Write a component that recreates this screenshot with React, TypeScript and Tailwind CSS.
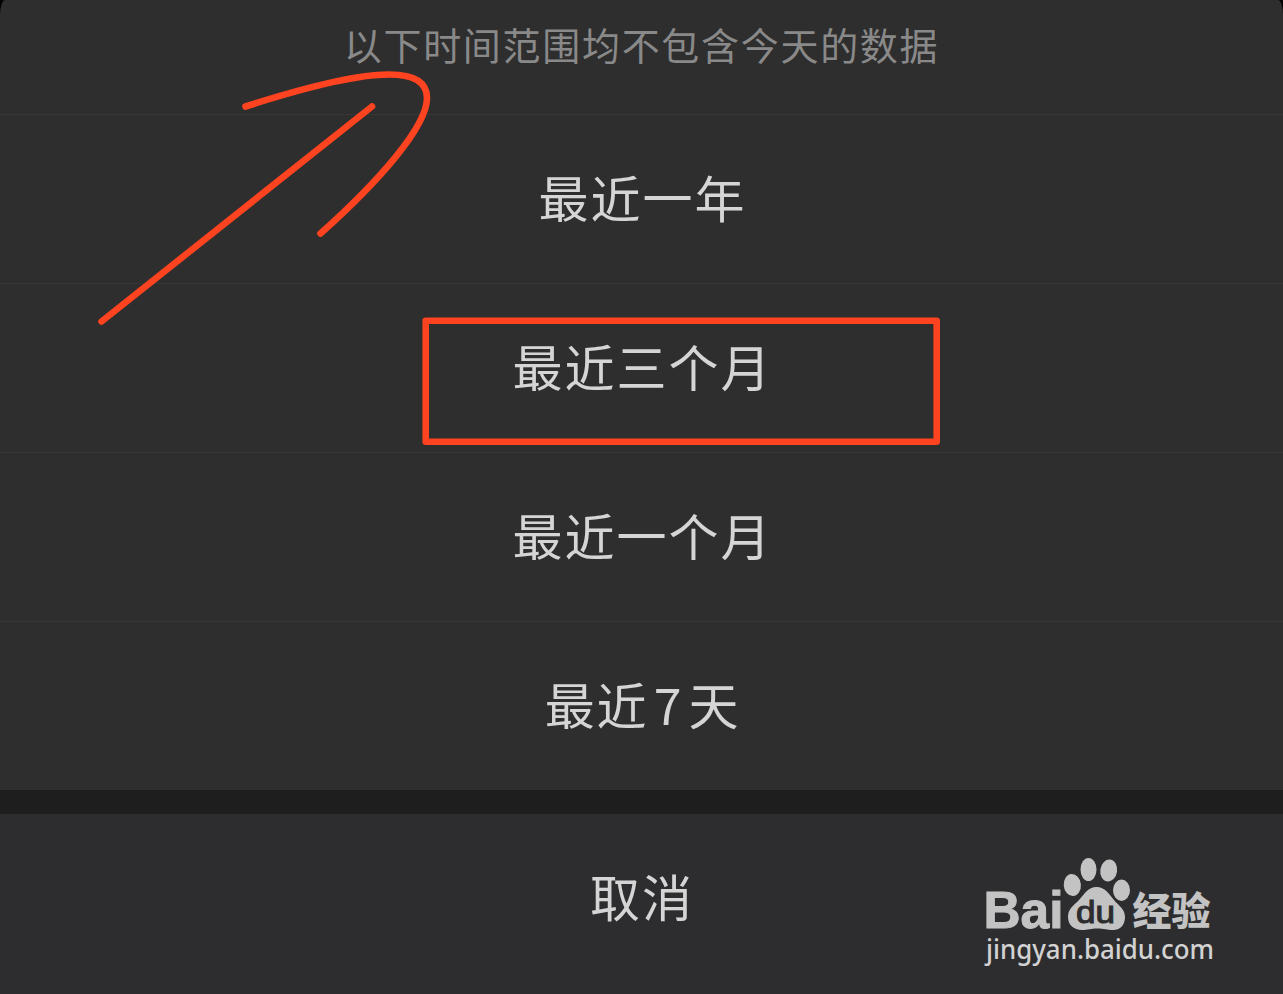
import type { ReactNode } from "react";

const options: { id: string; label: ReactNode }[] = [
  { id: "year", label: "最近一年" },
  { id: "quarter", label: "最近三个月" },
  { id: "month", label: "最近一个月" },
  { id: "week", label: <>最近<span className="mx-[5px]">7</span>天</> },
];

function Annotation() {
  return (
    <svg className="pointer-events-none absolute inset-0" width="1283" height="994" viewBox="0 0 1283 994" fill="none" stroke="#fd431f" strokeWidth="6.6" strokeLinecap="round" strokeLinejoin="round">
      <path d="M101.500 321.500L372 106.500" />
      <path d="M245.500 106.500C300 89 354 74.500 389 74.500C415 74.500 427 83 427 98C427 127 378 182 320.500 233.500" />
      <rect x="425.700" y="320.700" width="511" height="121" />
    </svg>
  );
}

function Watermark() {
  return (
    <svg className="absolute left-[970px] top-[840px] overflow-visible tracking-normal" width="260" height="140" viewBox="0 0 260 140" fill="#c3c3c3">
      <text x="13.500" y="88" fontFamily="Liberation Sans" fontWeight="700" fontSize="52" textLength="80" lengthAdjust="spacingAndGlyphs" stroke="#c3c3c3" strokeWidth="1">Bai</text>
      <ellipse cx="102.300" cy="45" rx="8.600" ry="11" transform="rotate(-5 102.300 45)" />
      <ellipse cx="118.500" cy="29.500" rx="8" ry="11.500" />
      <ellipse cx="138.700" cy="30.500" rx="8.400" ry="11" transform="rotate(8 138.700 30.500)" />
      <ellipse cx="151.500" cy="50.300" rx="8.500" ry="10.700" />
      <path d="M126.500 47C118 47 114.500 54 109 60C103 66 98 69 98 77C98 85 104 90 112 90C118 90 121 88.500 127 88.500C134 88.500 137 90 143 90C151 90 155 84 155 77C155 69 149 66 144 60C139 54 135 47 126.500 47Z" />
      <text x="106" y="82.500" fontFamily="Liberation Sans" fontSize="32" fill="#2d2d2f" stroke="#2d2d2f" strokeWidth="1.100" textLength="39" lengthAdjust="spacingAndGlyphs">du</text>
      <text x="162.500" y="84.500" fontFamily="Noto Sans CJK SC" fontWeight="900" fontSize="39" textLength="78" lengthAdjust="spacingAndGlyphs">经验</text>
      <text x="16" y="118.500" fontFamily="Noto Sans" fontWeight="500" fontSize="26.500" fill="#d2d2d2" textLength="228" lengthAdjust="spacingAndGlyphs">jingyan.baidu.com</text>
    </svg>
  );
}

export default function App() {
  return (
    <main className="relative flex h-[994px] w-[1283px] flex-col overflow-hidden bg-[#1e1e1e] font-['Noto_Sans_CJK_SC',sans-serif] text-[50px] leading-none tracking-[2px] text-[#d5d5d5]">
      <div className="bg-black">
        <section className="bg-[#2e2e2e] [border-radius:5px_5px_0_0/15px_15px_0_0]">
          <header className="flex h-[114px] justify-center pt-[25px] text-[38px] tracking-[1.700px] text-[#898989]">
            以下时间范围均不包含今天的数据
          </header>
          {options.map(({ id, label }) => (
            <button key={id} className="flex h-[169px] w-full items-center justify-center border-t border-[#363636] pb-[7px] pl-[2px] tracking-[2px]">
              {label}
            </button>
          ))}
        </section>
      </div>
      <button className="mt-6 flex h-[180px] w-full items-center justify-center bg-[#2d2d2f] pb-[18px] pl-[1px] tracking-[2px]">
        取消
      </button>
      <Annotation />
      <Watermark />
    </main>
  );
}
